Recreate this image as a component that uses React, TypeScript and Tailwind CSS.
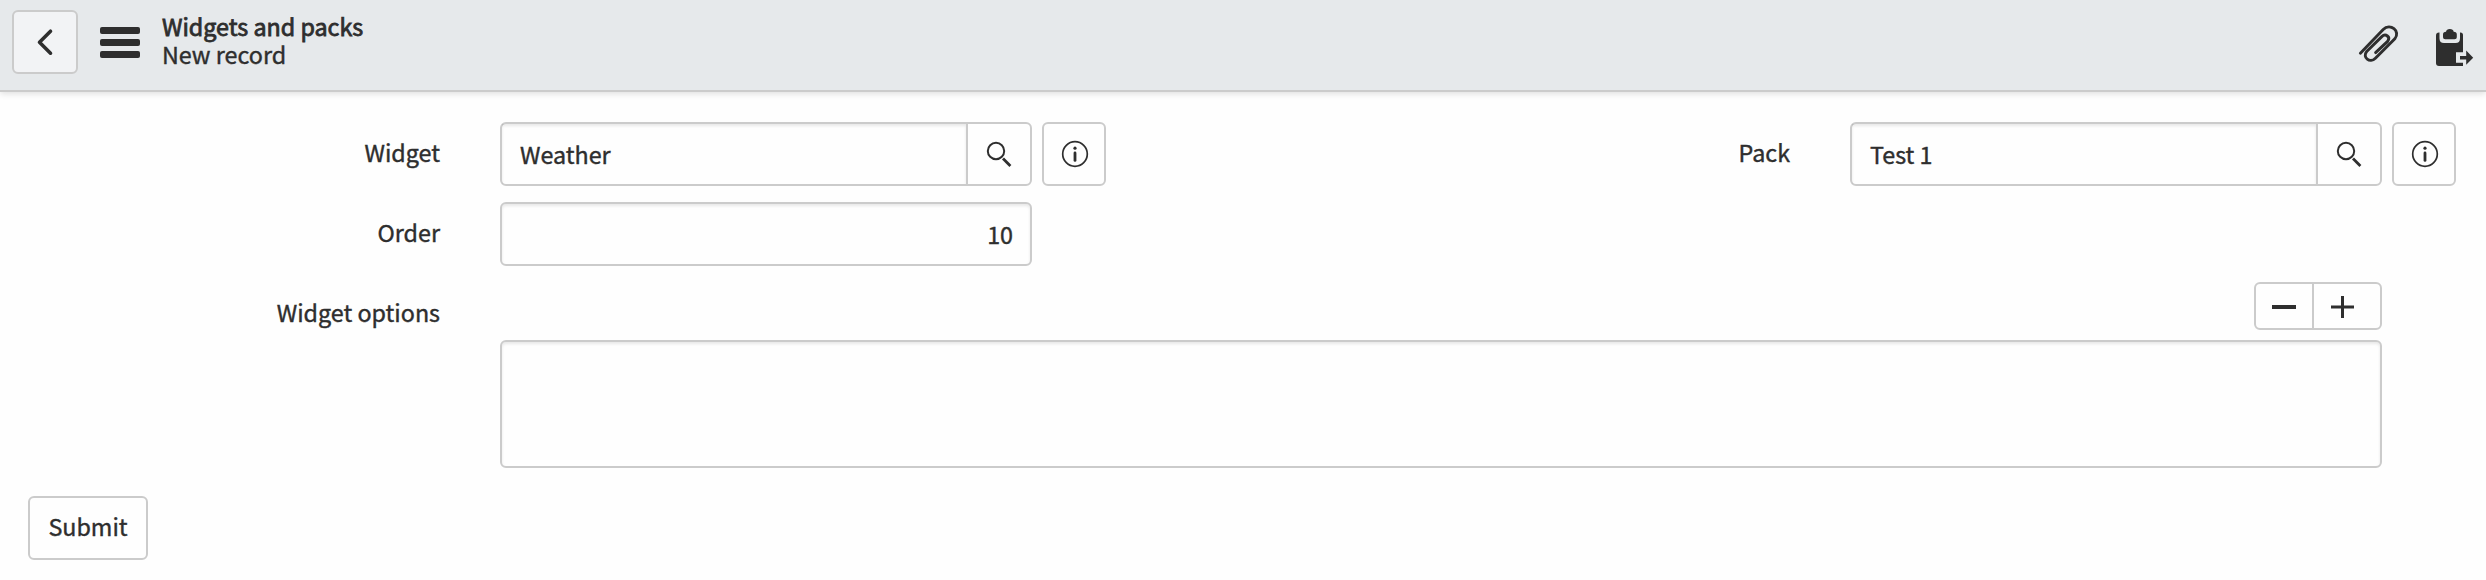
import React from "react";

function BackIcon() {
  return (
    <svg width="20" height="30" viewBox="0 0 20 30" fill="none" stroke="#2e2e2e" strokeWidth="3.6" strokeLinecap="round" strokeLinejoin="round">
      <path d="M15.500 4.200 L4.500 15.200 L15.500 26.200" />
    </svg>
  );
}

function SearchIcon() {
  return (
    <svg width="26" height="27" viewBox="0 0 26 27" fill="none" stroke="#2e2e2e">
      <circle cx="10" cy="10" r="8.2" strokeWidth="2" />
      <path d="M17 17.5 L24.400 24.900" strokeWidth="2.800" />
    </svg>
  );
}

function InfoIcon() {
  return (
    <svg width="28" height="28" viewBox="0 0 28 28" fill="none" stroke="#2e2e2e">
      <circle cx="14" cy="14" r="12.3" strokeWidth="1.7" />
      <circle cx="14" cy="8.2" r="1.6" fill="#2e2e2e" stroke="none" />
      <path d="M14 13 V20.4" strokeWidth="2.8" strokeLinecap="round" />
    </svg>
  );
}

function PaperclipIcon() {
  return (
    <svg width="42" height="40" viewBox="0 0 42 40" fill="none" stroke="#2e2e2e" strokeWidth="2.900" strokeLinecap="round">
      <path d="M2.4 29.3 L25.2 5.6 C32.2 -1.4 43 7.2 36.8 14.8 L17.4 34.2 C12 39.800 3.900 33.400 8.700 27.500 L23.800 12.600 C27.600 9 33 13 29.600 17.400 L17.600 28.600" />
    </svg>
  );
}

function ClipboardIcon() {
  return (
    <svg width="38" height="38" viewBox="0 0 38 38">
      <path d="M3 3.500 H24.500 Q27 3.500 27 6 V37 H3 Q0 37 0 34 V6.500 Q0 3.500 3 3.500 Z" fill="#2e2e2e" />
      <path d="M4.500 3 V9.500 Q4.500 13 8 13 H19.500 Q23 13 23 9.500 V3" fill="#e6e9eb" stroke="#e6e9eb" strokeWidth="2" />
      <path d="M10 2.800 Q10.500 0 13.800 0 Q17.200 0 17.700 2.800 Q20.800 2.800 20.800 5.500 V8.300 Q20.800 10.300 18.600 10.300 H9.200 Q7 10.300 7 8.300 V5.500 Q7 2.800 10 2.800 Z" fill="#2e2e2e" />
      <path d="M20 23.200 H29 V20 L38 28.500 L29 37 V33.800 H20 Z" fill="#e6e9eb" />
      <path d="M24 27 H30.200 V21.600 L37.200 28.700 L30.200 35.700 V30.500 H24 Z" fill="#2e2e2e" />
    </svg>
  );
}

function ReferenceField({ value }: { value: string }) {
  return (
    <div className="flex h-16 gap-[10px]">
      <div className="flex w-[532px] rounded-[6px] border-2 border-[#cbcbcb]">
        <div className="flex-1 px-[18px] leading-[60px] shadow-[inset_0_2px_3px_rgba(0,0,0,0.09)]">{value}</div>
        <button className="flex w-16 items-start border-l-2 border-[#cbcbcb] pt-[17px] pl-[18px]">
          <SearchIcon />
        </button>
      </div>
      <button className="flex w-16 items-center justify-center rounded-[6px] border-2 border-[#cbcbcb] pl-[2px]">
        <InfoIcon />
      </button>
    </div>
  );
}

function Label({ children }: { children: React.ReactNode }) {
  return <div className="h-16 pr-[60px] text-right leading-[60px]">{children}</div>;
}

export default function App() {
  return (
    <div className="h-[580px] bg-[#fefefe] text-[23.3px] text-[#2e2e2e] [font-family:'Noto_Sans_CJK_SC',sans-serif] [-webkit-text-stroke:0.4px_#2e2e2e]">
      <header className="flex h-[92px] items-start border-b-2 border-[#cbcbcb] bg-[#e6e9eb] shadow-[0_2px_6px_rgba(0,0,0,0.12)]">
        <button className="mt-[10px] ml-3 flex h-16 w-[66px] items-center justify-center rounded-[6px] border-2 border-[#cbcbcb] bg-[#f2f3f5]">
          <BackIcon />
        </button>
        <div className="mt-[27px] ml-[22px] flex w-10 flex-col gap-[5px]">
          <div className="h-[7px] rounded-[2px] bg-[#2e2e2e]" />
          <div className="h-[7px] rounded-[2px] bg-[#2e2e2e]" />
          <div className="h-[7px] rounded-[2px] bg-[#2e2e2e]" />
        </div>
        <div className="mt-[12px] ml-[22px] leading-[28px]">
          <div className="[-webkit-text-stroke:0.8px_#2e2e2e]">Widgets and packs</div>
          <div>New record</div>
        </div>
        <div className="mt-[24px] mr-[12px] ml-auto flex">
          <PaperclipIcon />
          <div className="mt-[5px] ml-[36px]">
            <ClipboardIcon />
          </div>
        </div>
      </header>

      <main className="pt-[30px]">
        <div className="grid grid-cols-[500px_606px_744px_606px]">
          <Label>Widget</Label>
          <ReferenceField value="Weather" />
          <Label>Pack</Label>
          <ReferenceField value="Test 1" />
        </div>

        <div className="mt-4 grid grid-cols-[500px_532px]">
          <Label>Order</Label>
          <div className="h-16 rounded-[6px] border-2 border-[#cbcbcb] px-[17px] text-right leading-[60px] shadow-[inset_0_2px_3px_rgba(0,0,0,0.09)]">10</div>
        </div>

        <div className="mt-4 grid grid-cols-[500px_1882px]">
          <Label>Widget options</Label>
          <div>
            <div className="ml-auto flex h-12 w-32 rounded-[6px] border-2 border-[#cbcbcb]">
              <button className="flex w-14 items-center justify-center pt-[2px]">
                <span className="h-1 w-6 bg-[#2e2e2e]" />
              </button>
              <button className="flex flex-1 items-center border-l-2 border-[#cbcbcb] pt-[2px] pl-[16px]">
                <svg width="24" height="24" viewBox="0 0 24 24" stroke="#2e2e2e" strokeWidth="3">
                  <path d="M12.500 1 V23 M1 12 H24" />
                </svg>
              </button>
            </div>
            <div className="mt-[10px] h-32 rounded-[6px] border-2 border-[#cbcbcb] shadow-[inset_0_2px_3px_rgba(0,0,0,0.09)]" />
          </div>
        </div>

        <button className="mt-7 ml-7 block h-16 w-[120px] rounded-[6px] border-2 border-[#cbcbcb] pb-[4px] text-center leading-[56px]">Submit</button>
      </main>
    </div>
  );
}
